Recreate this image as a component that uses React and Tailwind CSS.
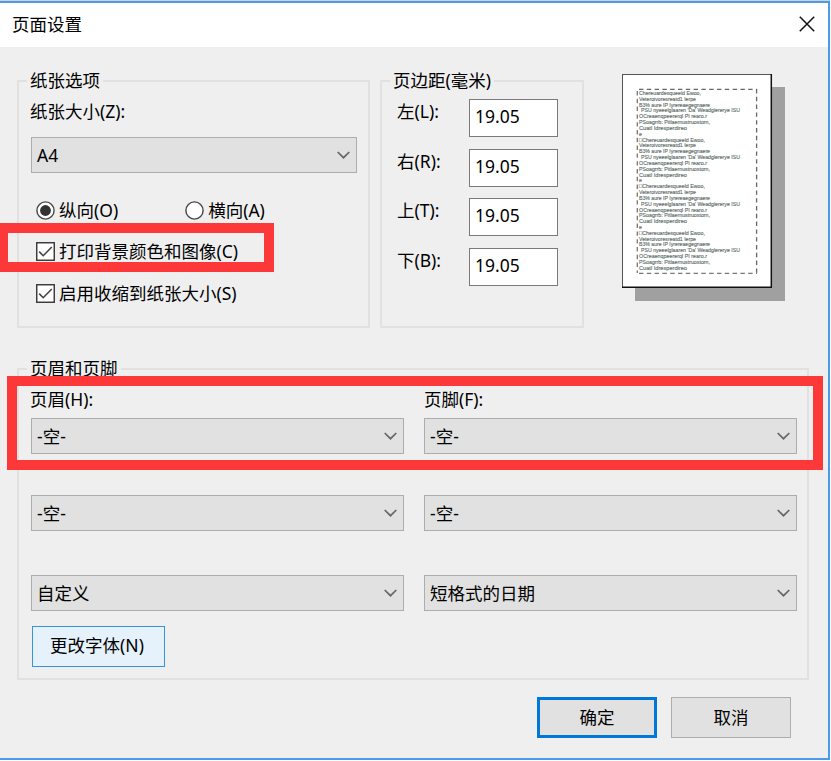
const MARGINS = [
  { label: '左(L):', value: '19.05' },
  { label: '右(R):', value: '19.05' },
  { label: '上(T):', value: '19.05' },
  { label: '下(B):', value: '19.05' },
]

// x offset, drawn width and text of every line in the sample page
const SAMPLE_LINES = [
  { x: 17, w: 62, text: 'Chereuardesqueeld Ewoo,' },
  { x: 17, w: 57, text: 'Veteroivoresreatd1 Ierpe' },
  { x: 17, w: 71, text: 'B3% aure IP Iyrereaegegnaere' },
  { x: 19, w: 99, text: "PSU nyeeelglaaren 'Da' Weadglererye ISU" },
  { x: 17, w: 68, text: 'OCreaenqpeererqI PI rearo.r' },
  { x: 17, w: 71, text: 'PSoagrrb: Pitlaernustruostorn,' },
  { x: 17, w: 48, text: 'Cuatl Idresperdireo' },
  { x: 17, w: 3, text: 'e' },
]

function Group({ title, className, children }) {
  return (
    <fieldset className={`border-2 border-[#e1e1e1] ${className}`}>
      <legend className="ml-[8px] h-[22px] px-[3px] leading-[21px]">{title}</legend>
      {children}
    </fieldset>
  )
}

function Select({ value, className = '' }) {
  return (
    <div className={`flex h-[36px] items-center justify-between border border-[#adadad] bg-[#e1e1e1] pr-[6px] pl-[5px] ${className}`}>
      <span className="pb-px">{value}</span>
      <svg width="13" height="8" viewBox="0 0 13 8" fill="none" stroke="#666" strokeWidth="1.7">
        <path d="M0.7 1L6.5 6.7L12.3 1" />
      </svg>
    </div>
  )
}

function Radio({ label, checked }) {
  return (
    <div className="flex items-center gap-[4px]">
      <svg width="19" height="19" viewBox="0 0 19 19" fill="none">
        <circle cx="9.5" cy="9.5" r="8.6" fill="#fff" stroke="#444" strokeWidth="1.4" />
        {checked && <circle cx="9.5" cy="9.5" r="5.4" fill="#333" />}
      </svg>
      <span>{label}</span>
    </div>
  )
}

function Checkbox({ label }) {
  return (
    <div className="flex h-[20px] items-center gap-[4px]">
      <svg width="19" height="19" viewBox="0 0 19 19" fill="none" stroke="#333">
        <rect x="0.75" y="0.75" width="17.5" height="17.5" fill="#fff" strokeWidth="1.4" />
        <path d="M3.2 9.6L7.2 13.7L15.8 5" stroke="#444" strokeWidth="1.6" />
      </svg>
      <span className="pb-px">{label}</span>
    </div>
  )
}

function PagePreview() {
  return (
    <svg width="164" height="228" viewBox="0 0 164 228" className="mt-[4px] ml-[37px] shrink-0">
      <rect x="13" y="13" width="150" height="214" fill="#a0a0a0" />
      <rect x="0.5" y="0.5" width="149" height="213" fill="#fff" stroke="#555" />
      <path d="M149.3 0V213.3H0" fill="none" stroke="#111" strokeWidth="1.5" />
      <path d="M17 15.3H135" stroke="#666" strokeWidth="1.3" strokeDasharray="4.4 3.4" />
      <path d="M17 199.3H135" stroke="#777" strokeWidth="1.3" strokeDasharray="4.4 3.4" />
      <path d="M15.3 17V199" stroke="#777" strokeWidth="1.3" strokeDasharray="4.4 3.4" />
      <path d="M134.6 15V199" stroke="#666" strokeWidth="1.3" strokeDasharray="4.4 3.4" />
      <g fontFamily="Liberation Sans, Arial, sans-serif" fontSize="6.2" fill="#5c6c68" stroke="#5c6c68" strokeWidth="0.15">
        {[0, 1, 2, 3].map((block) =>
          SAMPLE_LINES.map((line, i) => {
            if (block === 3 && i === 7) return null
            const boxed = block > 0 && i === 0
            return (
              <text
                key={`${block}-${i}`}
                x={line.x}
                y={20.9 + (block * 8 + i) * 5.83}
                textLength={boxed ? line.w + 4 : line.w}
                lengthAdjust="spacingAndGlyphs"
                fill={i === 7 ? '#a0507a' : undefined}
              >
                {boxed ? '□' + line.text : line.text}
              </text>
            )
          }),
        )}
      </g>
    </svg>
  )
}

export default function App() {
  return (
    <div className="relative h-[761px] w-[831px] overflow-hidden bg-white font-['Noto_Sans','Noto_Sans_CJK_SC',sans-serif] text-[17.5px] leading-[22px] text-black">
      <div className="flex h-[760px] w-[830px] flex-col border-t border-t-[#d0d0d0]">
        <div className="flex flex-1 flex-col border-t-2 border-r-2 border-b-2 border-[#4a9bea] bg-[#efefef]">
          <div className="flex h-[44px] shrink-0 items-center justify-between bg-white pr-[13px] pl-[12px]">
            <span className="pb-[3px]">页面设置</span>
            <svg width="16" height="16" viewBox="0 0 16 16" stroke="#111" strokeWidth="1.5" className="mb-[3px]">
              <path d="M0.8 0.8L15.2 15.2M15.2 0.8L0.8 15.2" />
            </svg>
          </div>

          <div className="flex pt-[23px] pl-[17px]">
            <Group title="纸张选项" className="h-[258px] w-[353px]">
              <div className="pl-[12px]">
                <div className="mt-[8px] -ml-px">纸张大小(Z):</div>
                <Select value="A4" className="mt-[15px] w-[326px]" />
                <div className="mt-[26px] flex h-[22px] items-center gap-[67px] pl-[5px]">
                  <Radio label="纵向(O)" checked />
                  <Radio label="横向(A)" />
                </div>
                <div className="mt-[20px] flex flex-col gap-[22px] pl-[5px]">
                  <Checkbox label="打印背景颜色和图像(C)" />
                  <Checkbox label="启用收缩到纸张大小(S)" />
                </div>
              </div>
            </Group>

            <Group title="页边距(毫米)" className="ml-[10px] h-[258px] w-[204px]">
              <div className="mt-[7px] flex flex-col gap-[12px] pl-[15px]">
                {MARGINS.map((m) => (
                  <div key={m.label} className="flex h-[37.6px]">
                    <span className="mt-px w-[72px]">{m.label}</span>
                    <span className="flex h-[38px] w-[89px] items-center border border-[#7a7a7a] bg-white pb-[4px] pl-[5px]">{m.value}</span>
                  </div>
                ))}
              </div>
            </Group>

            <div className="pl-px">
              <PagePreview />
            </div>
          </div>

          <Group title="页眉和页脚" className="mt-[30px] ml-[17px] h-[322px] w-[792px]">
            <div className="pl-[12px]">
              <div className="mt-[8px] grid grid-cols-[373px_373px] gap-x-[20px]">
                <span className="-ml-px">页眉(H):</span>
                <span>页脚(F):</span>
              </div>
              <div className="mt-[8px] grid grid-cols-[373px_373px] gap-x-[20px]">
                <Select value="-空-" />
                <Select value="-空-" />
                <Select value="-空-" className="mt-[41px]" />
                <Select value="-空-" className="mt-[41px]" />
                <Select value="自定义" className="mt-[44px]" />
                <Select value="短格式的日期" className="mt-[44px]" />
              </div>
              <button className="mt-[15px] ml-px h-[41px] w-[133px] border-[1.5px] border-[#3594e0] bg-[#e5f1fb] pr-[3px] pb-[3px]">更改字体(N)</button>
            </div>
          </Group>

          <div className="mt-[17px] flex gap-[14px] pl-[537px]">
            <button className="h-[41px] w-[120px] border-[3px] border-[#0078d7] bg-[#e1e1e1] pb-[2px]">确定</button>
            <button className="h-[41px] w-[120px] border border-[#adadad] bg-[#e1e1e1] pb-[2px]">取消</button>
          </div>
        </div>
      </div>

      {/* highlight frames */}
      <div className="absolute top-[223px] left-[-2px] h-[49px] w-[276px] border-[10px] border-[#fc3838]" />
      <div className="absolute top-[376px] left-[7px] h-[94px] w-[816px] border-[10px] border-[#fc3838]" />
    </div>
  )
}
